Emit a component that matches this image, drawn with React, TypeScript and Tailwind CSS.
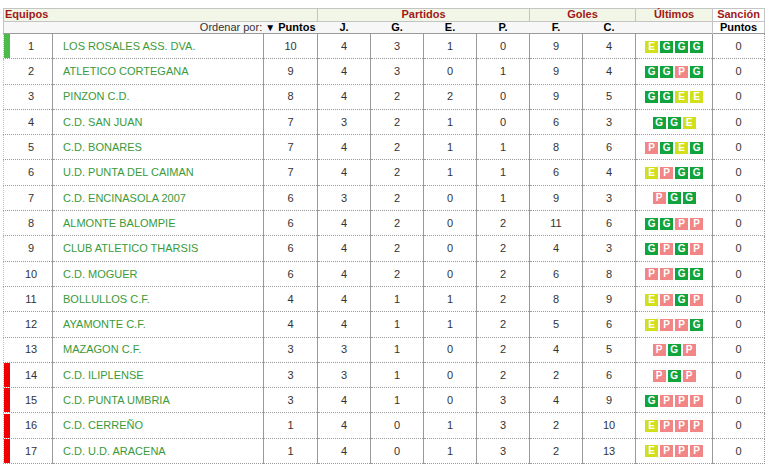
import React from "react";

type Team = {
    pos: number;
    name: string;
    pts: number;
    j: number;
    g: number;
    e: number;
    p: number;
    f: number;
    c: number;
    last: string;
    san: number;
    mark?: "up" | "down";
};

const teams: Team[] = [
    { pos: 1, name: "LOS ROSALES ASS. DVA.", pts: 10, j: 4, g: 3, e: 1, p: 0, f: 9, c: 4, last: "EGGG", san: 0, mark: "up" },
    { pos: 2, name: "ATLETICO CORTEGANA", pts: 9, j: 4, g: 3, e: 0, p: 1, f: 9, c: 4, last: "GGPG", san: 0 },
    { pos: 3, name: "PINZON C.D.", pts: 8, j: 4, g: 2, e: 2, p: 0, f: 9, c: 5, last: "GGEE", san: 0 },
    { pos: 4, name: "C.D. SAN JUAN", pts: 7, j: 3, g: 2, e: 1, p: 0, f: 6, c: 3, last: "GGE", san: 0 },
    { pos: 5, name: "C.D. BONARES", pts: 7, j: 4, g: 2, e: 1, p: 1, f: 8, c: 6, last: "PGEG", san: 0 },
    { pos: 6, name: "U.D. PUNTA DEL CAIMAN", pts: 7, j: 4, g: 2, e: 1, p: 1, f: 6, c: 4, last: "EPGG", san: 0 },
    { pos: 7, name: "C.D. ENCINASOLA 2007", pts: 6, j: 3, g: 2, e: 0, p: 1, f: 9, c: 3, last: "PGG", san: 0 },
    { pos: 8, name: "ALMONTE BALOMPIE", pts: 6, j: 4, g: 2, e: 0, p: 2, f: 11, c: 6, last: "GGPP", san: 0 },
    { pos: 9, name: "CLUB ATLETICO THARSIS", pts: 6, j: 4, g: 2, e: 0, p: 2, f: 4, c: 3, last: "GPGP", san: 0 },
    { pos: 10, name: "C.D. MOGUER", pts: 6, j: 4, g: 2, e: 0, p: 2, f: 6, c: 8, last: "PPGG", san: 0 },
    { pos: 11, name: "BOLLULLOS C.F.", pts: 4, j: 4, g: 1, e: 1, p: 2, f: 8, c: 9, last: "EPGP", san: 0 },
    { pos: 12, name: "AYAMONTE C.F.", pts: 4, j: 4, g: 1, e: 1, p: 2, f: 5, c: 6, last: "EPPG", san: 0 },
    { pos: 13, name: "MAZAGON C.F.", pts: 3, j: 3, g: 1, e: 0, p: 2, f: 4, c: 5, last: "PGP", san: 0 },
    { pos: 14, name: "C.D. ILIPLENSE", pts: 3, j: 3, g: 1, e: 0, p: 2, f: 2, c: 6, last: "PGP", san: 0, mark: "down" },
    { pos: 15, name: "C.D. PUNTA UMBRIA", pts: 3, j: 4, g: 1, e: 0, p: 3, f: 4, c: 9, last: "GPPP", san: 0, mark: "down" },
    { pos: 16, name: "C.D. CERREÑO", pts: 1, j: 4, g: 0, e: 1, p: 3, f: 2, c: 10, last: "EPPP", san: 0, mark: "down" },
    { pos: 17, name: "C.D. U.D. ARACENA", pts: 1, j: 4, g: 0, e: 1, p: 3, f: 2, c: 13, last: "EPPP", san: 0, mark: "down" },
];

const badgeColor: Record<string, string> = {
    G: "bg-[#12a43c]",
    E: "bg-[#d2e01c]",
    P: "bg-[#f28585]",
};

const Badge = ({ r }: { r: string }) => (
    <span
        className={`inline-flex h-[12px] w-[13px] items-center justify-center text-[10px] font-bold leading-none text-white ${badgeColor[r]}`}
    >
        {r}
    </span>
);

const num = "border-r border-r-[#9a9a9a] text-center";

export default function App() {
    return (
        <div className="bg-white pl-[3px] pt-[8px] font-['Liberation_Sans',Arial,sans-serif] text-[11px] text-[#333]">
            <table className="w-[761px] table-fixed border-collapse">
                <colgroup>
                    <col className="w-[49px]" />
                    <col className="w-[211px]" />
                    <col className="w-[54px]" />
                    <col className="w-[53px]" />
                    <col className="w-[53px]" />
                    <col className="w-[53px]" />
                    <col className="w-[53px]" />
                    <col className="w-[53px]" />
                    <col className="w-[53px]" />
                    <col className="w-[77px]" />
                    <col className="w-[52px]" />
                </colgroup>
                <thead>
                    <tr className="h-[12.5px] border border-[#c4c4c4] bg-[#f1f6e6] font-bold leading-[11px] text-[#a01818]">
                        <th colSpan={3} className="border-r border-[#c4c4c4] p-0 pl-[1px] text-left">Equipos</th>
                        <th colSpan={4} className="border-r border-[#c4c4c4] p-0 text-center">Partidos</th>
                        <th colSpan={2} className="border-r border-[#c4c4c4] p-0 text-center">Goles</th>
                        <th className="border-r border-[#c4c4c4] p-0 text-center">Últimos</th>
                        <th className="bg-white p-0 text-center">Sanción</th>
                    </tr>
                    <tr className="h-[12.5px] border border-b-[#9a9a9a] border-[#c4c4c4] bg-[#f7f7f7] leading-[11px] text-black">
                        <th colSpan={3} className="p-0 pr-[2px] text-right font-normal">
                            <span className="text-[#333]">Ordenar por: </span>
                            <span className="text-[10px]">▼</span> <span className="font-bold">Puntos</span>
                        </th>
                        <th className="p-0 text-center font-bold">J.</th>
                        <th className="p-0 text-center font-bold">G.</th>
                        <th className="p-0 text-center font-bold">E.</th>
                        <th className="p-0 text-center font-bold">P.</th>
                        <th className="p-0 text-center font-bold">F.</th>
                        <th className="p-0 text-center font-bold">C.</th>
                        <th className="border-r border-[#c4c4c4] p-0"></th>
                        <th className="bg-white p-0 text-center font-bold">Puntos</th>
                    </tr>
                </thead>
                <tbody>
                    {teams.map((t) => (
                        <tr
                            key={t.pos}
                            className="h-[25.3px] border-b border-dotted border-b-[#9a9a9a] border-l border-l-[#c4c4c4] border-r border-r-[#9a9a9a]"
                        >
                            <td className="p-0">
                                <div className="flex h-[24px] items-center">
                                    <div
                                        className={`h-full w-[6px] ${
                                            t.mark === "up" ? "bg-[#4cbb4c]" : t.mark === "down" ? "bg-[#f00000]" : "bg-transparent"
                                        }`}
                                    />
                                    <div className="flex-1 text-center">{t.pos}</div>
                                </div>
                            </td>
                            <td className="border-x border-x-[#9a9a9a] pl-[10px] text-[#3a9a3a]">{t.name}</td>
                            <td className={num}>{t.pts}</td>
                            <td className={num}>{t.j}</td>
                            <td className={num}>{t.g}</td>
                            <td className={num}>{t.e}</td>
                            <td className={num}>{t.p}</td>
                            <td className={num}>{t.f}</td>
                            <td className={num}>{t.c}</td>
                            <td className={num}>
                                <div className="flex items-center justify-center gap-[2px] pt-[1px]">
                                    {t.last.split("").map((r, i) => (
                                        <Badge key={i} r={r} />
                                    ))}
                                </div>
                            </td>
                            <td className="text-center">{t.san}</td>
                        </tr>
                    ))}
                </tbody>
            </table>
        </div>
    );
}
